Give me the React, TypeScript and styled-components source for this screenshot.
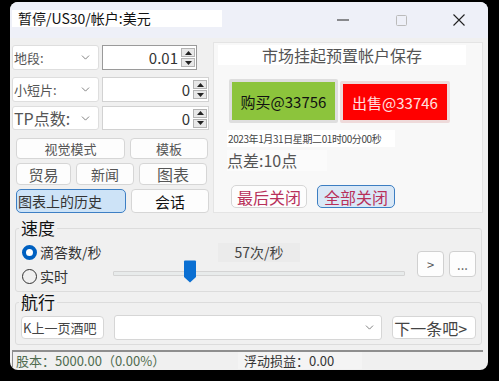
import styled, { createGlobalStyle } from 'styled-components';
import { ChevronDown } from 'lucide-react';

const GlobalStyle = createGlobalStyle`
  html, body {
    margin: 0;
    padding: 0;
    background: #000;
  }
  body {
    width: 499px;
    height: 381px;
    overflow: hidden;
    font-family: "Noto Sans CJK SC", "Noto Sans", sans-serif;
  }
  * {
    box-sizing: border-box;
  }
  button {
    font-family: inherit;
  }
`;

const Window = styled.div`
  margin: 2px 0 0 10px;
  width: 478px;
  height: 368px;
  background: #f0f0f0;
  border-radius: 8px;
  overflow: hidden;

  display: flex;
  flex-direction: column;
`;

const TitleBar = styled.div`
  height: 36px;
  flex-shrink: 0;
  background: #eef0f8;
  padding-left: 2px;

  display: flex;
`;

const TitleText = styled.div`
  margin-top: 8px;
  width: 210px;
  height: 17px;
  padding-left: 6px;

  background: #fff;
  color: #111;
  font-size: 14px;
  line-height: 17px;
  white-space: nowrap;
`;

const WinButtons = styled.div`
  margin-left: auto;
  display: flex;
`;

const WinButton = styled.div`
  width: 58px;
  height: 36px;
  display: flex;
  align-items: center;
  justify-content: center;
`;

const Body = styled.div`
  flex: 1;
  padding: 0 5px 0 2px;
  display: flex;
  flex-direction: column;
`;

const TopArea = styled.div`
  display: flex;
  gap: 4px;
  height: 175px;
`;

const LeftCol = styled.div`
  width: 197px;
  padding-top: 7px;
  display: flex;
  flex-direction: column;
`;

const FieldRow = styled.div<{ $top: number; $h: number }>`
  margin-top: ${(p) => p.$top}px;
  height: ${(p) => p.$h}px;
  display: flex;
  gap: 3px;
`;

const Combo = styled.div<{ $w: number }>`
  width: ${(p) => p.$w}px;
  height: 100%;
  padding: 0 6px 0 1px;

  background: #fff;
  border: 1px solid #dedede;
  border-radius: 3px;

  display: flex;
  align-items: center;
  justify-content: space-between;
`;

const ComboLabel = styled.span<{ $size: number }>`
  font-size: ${(p) => p.$size}px;
  color: #555;
  white-space: nowrap;
`;

const Spin = styled.div<{ $w: number; $dark?: boolean }>`
  width: ${(p) => p.$w}px;
  height: 100%;
  padding: 1px;

  border: 1px solid ${(p) => (p.$dark ? '#9a9a9a' : '#d2d2d2')};
  background: #fff;

  display: flex;
  align-items: stretch;
`;

const SpinValue = styled.div`
  flex: 1;
  padding-right: 3px;
  text-align: right;
  font-size: 15px;
  line-height: 21px;
  color: #333;
`;

const SpinArrows = styled.div`
  width: 14px;
  display: flex;
  flex-direction: column;
  justify-content: center;
  gap: 1px;
`;

const SpinArrow = styled.div`
  height: 9px;
  background: #e8e8e8;
  border: 1px solid #b4b4b4;
  display: flex;
  align-items: center;
  justify-content: center;
`;

const ButtonRow = styled.div<{ $top: number; $h: number }>`
  margin-top: ${(p) => p.$top}px;
  height: ${(p) => p.$h}px;
  padding-left: 4px;
  display: flex;
  gap: 5px;
`;

const Btn = styled.button<{ $w: number; $size: number; $dark?: boolean }>`
  width: ${(p) => p.$w}px;
  height: 100%;
  padding: 0;

  background: #fdfdfd;
  border: 1px solid #d6d6d6;
  border-radius: 4px;

  color: ${(p) => (p.$dark ? '#111' : '#555')};
  font-size: ${(p) => p.$size}px;
  line-height: 1;
`;

const SelectedBtn = styled.button<{ $w: number }>`
  width: ${(p) => p.$w}px;
  height: 100%;
  padding: 0 0 0 1px;

  background: #cde3f7;
  border: 1px solid #3d7fc4;
  border-radius: 5px;

  text-align: left;
  color: #333;
  font-size: 14px;
  line-height: 1;
  white-space: nowrap;
`;

const RightPanel = styled.div`
  width: 270px;
  height: 171px;
  margin-top: 4px;

  background: #f8f8f8;
  border: 1px solid #e4e4e4;

  display: flex;
  flex-direction: column;
`;

const PanelTitle = styled.div`
  margin: 2px 16px 0 4px;
  height: 20px;

  background: #fff;
  color: #555;
  font-size: 16px;
  line-height: 20px;
  text-align: center;
`;

const TradeRow = styled.div`
  margin-top: 14px;
  padding-left: 15px;
  display: flex;
  gap: 2px;
`;

const TradeBtn = styled.button<{ $sell?: boolean }>`
  width: ${(p) => (p.$sell ? 110 : 109)}px;
  height: ${(p) => (p.$sell ? 42 : 44)}px;
  margin-top: ${(p) => (p.$sell ? 2 : 0)}px;
  padding: 0;

  background: ${(p) => (p.$sell ? '#ff0000' : '#8cc43c')};
  border: 3px solid ${(p) => (p.$sell ? '#eedada' : '#dedede')};
  border-radius: 2px;

  color: ${(p) => (p.$sell ? '#ffe0e0' : '#111')};
  font-size: 15px;
`;

const DateStrip = styled.div`
  margin: 7px 0 0 13px;
  width: 168px;
  height: 17px;
  padding-left: 1px;

  background: #fff;
  color: #444;
  font-size: 10px;
  line-height: 17px;
  letter-spacing: -0.4px;
  white-space: nowrap;
`;

const SpreadStrip = styled.div`
  margin: 3px 0 0 13px;
  width: 100px;
  height: 21px;

  background: #fbfbfb;
  color: #555;
  font-size: 16px;
  line-height: 21px;
`;

const CloseRow = styled.div`
  margin: 14px 0 0 17px;
  height: 23px;
  display: flex;
  gap: 10px;
`;

const CloseBtn = styled.button<{ $blue?: boolean }>`
  width: ${(p) => (p.$blue ? 78 : 76)}px;
  height: 100%;
  padding: 0;

  background: ${(p) => (p.$blue ? '#dae8f6' : '#fdfdfd')};
  border: 1px solid ${(p) => (p.$blue ? '#3c7ec2' : '#d6d6d6')};
  border-radius: 5px;

  color: #b8305a;
  font-size: 16px;
  line-height: 1;
`;

const Group = styled.fieldset<{ $top: number }>`
  margin: ${(p) => p.$top}px 1px 0 3px;
  padding: 0;
  border: 1px solid #dcdcdc;
  border-radius: 3px;
  min-width: 0;
`;

const Legend = styled.legend`
  margin-left: 3px;
  padding: 0 2px;
  font-size: 17px;
  line-height: 18px;
  color: #111;
`;

const SpeedContent = styled.div`
  height: 54px;
  padding-left: 6px;
  display: flex;
  align-items: center;
`;

const RadioCol = styled.div`
  width: 91px;
  display: flex;
  flex-direction: column;
  gap: 2px;
`;

const RadioRow = styled.div`
  height: 22px;
  display: flex;
  align-items: center;
  gap: 3px;
  font-size: 14px;
  color: #333;
  white-space: nowrap;
`;

const RadioDot = styled.span<{ $on?: boolean }>`
  width: 15px;
  height: 15px;
  border-radius: 50%;
  flex-shrink: 0;
  background: ${(p) => (p.$on ? '#fff' : 'transparent')};
  border: ${(p) => (p.$on ? '4px solid #0060c0' : '1px solid #333')};
`;

const SliderArea = styled.div`
  width: 292px;
  display: flex;
  flex-direction: column;
`;

const SpeedLabel = styled.div`
  margin-left: 105px;
  width: 82px;
  height: 19px;

  background: #ebebeb;
  color: #444;
  font-size: 14px;
  line-height: 19px;
  text-align: center;
`;

const TrackWrap = styled.div`
  position: relative;
  height: 24px;
  display: flex;
  align-items: center;
`;

const Track = styled.div`
  width: 100%;
  height: 5px;
  background: #e8ebeb;
  border: 1px solid #d4d4d4;
  border-radius: 1px;
`;

const Thumb = styled.svg`
  position: absolute;
  left: 70px;
  top: -2px;
`;

const SmallBtn = styled.button<{ $ml: number }>`
  margin-left: ${(p) => p.$ml}px;
  width: 27px;
  height: 26px;
  padding: 0;

  background: #fdfdfd;
  border: 1px solid #d0d0d0;
  border-radius: 4px;

  color: #555;
  font-size: 13px;
  line-height: 1;
`;

const NavContent = styled.div`
  height: 33px;
  padding: 0 5px;
  display: flex;
  align-items: center;
`;

const NavBtn = styled.button<{ $w: number; $size: number; $ml?: number }>`
  margin-left: ${(p) => p.$ml || 0}px;
  width: ${(p) => p.$w}px;
  height: 23px;
  padding: 0 0 0 1px;

  background: #fff;
  border: 1px solid #d6d6d6;
  border-radius: 4px;

  text-align: left;
  color: #444;
  font-size: ${(p) => p.$size}px;
  line-height: 1;
  white-space: nowrap;
`;

const NavCombo = styled.div`
  margin-left: 10px;
  width: 269px;
  height: 25px;
  padding-right: 5px;

  background: #fff;
  border: 1px solid #d6d6d6;
  border-radius: 3px;

  display: flex;
  align-items: center;
  justify-content: flex-end;
`;

const StatusBar = styled.div`
  margin-top: 5px;
  height: 19px;
  border-top: 2px solid #8e8e8e;
  display: flex;
  font-size: 13px;
  line-height: 17px;
  white-space: nowrap;
`;

const StatusCell = styled.div<{ $w: number; $color: string; $first?: boolean }>`
  width: ${(p) => p.$w}px;
  padding-left: ${(p) => (p.$first ? 3 : 6)}px;
  color: ${(p) => p.$color};
  border-left: ${(p) => (p.$first ? '1px solid #8e8e8e' : 'none')};
  background: ${(p) => (p.$first ? 'transparent' : '#f4f4f4')};
`;

const Arrow = ({ up }: { up?: boolean }) => (
  <svg width="7" height="4" viewBox="0 0 7 4">
    <path d={up ? 'M0 4 L3.5 0 L7 4 Z' : 'M0 0 L3.5 4 L7 0 Z'} fill="#222" />
  </svg>
);

const SpinBox = ({ value, w, dark }: { value: string; w: number; dark?: boolean }) => (
  <Spin $w={w} $dark={dark}>
    <SpinValue>{value}</SpinValue>
    <SpinArrows>
      <SpinArrow>
        <Arrow up />
      </SpinArrow>
      <SpinArrow>
        <Arrow />
      </SpinArrow>
    </SpinArrows>
  </Spin>
);

const ComboBox = ({ label, size }: { label: string; size: number }) => (
  <Combo $w={87}>
    <ComboLabel $size={size}>{label}</ComboLabel>
    <ChevronDown size={13} strokeWidth={1.5} color="#666" />
  </Combo>
);

const App = () => {
  return (
    <>
      <GlobalStyle />
      <Window>
        <TitleBar>
          <TitleText>暂停/US30/帐户:美元</TitleText>
          <WinButtons>
            <WinButton>
              <svg width="12" height="2" viewBox="0 0 12 2">
                <rect x="0" y="0.5" width="12" height="1" fill="#222" />
              </svg>
            </WinButton>
            <WinButton>
              <svg width="11" height="11" viewBox="0 0 11 11">
                <rect x="0.5" y="0.5" width="10" height="10" rx="1" fill="none" stroke="#bbb" />
              </svg>
            </WinButton>
            <WinButton>
              <svg width="12" height="12" viewBox="0 0 12 12">
                <path d="M0.5 0.5 L11.5 11.5 M11.5 0.5 L0.5 11.5" stroke="#222" strokeWidth="1.1" />
              </svg>
            </WinButton>
          </WinButtons>
        </TitleBar>

        <Body>
          <TopArea>
            <LeftCol>
              <FieldRow $top={0} $h={25}>
                <ComboBox label="地段:" size={13} />
                <SpinBox value="0.01" w={95} dark />
              </FieldRow>
              <FieldRow $top={7} $h={25}>
                <ComboBox label="小短片:" size={13} />
                <SpinBox value="0" w={107} />
              </FieldRow>
              <FieldRow $top={4} $h={24}>
                <ComboBox label="TP点数:" size={16} />
                <SpinBox value="0" w={107} />
              </FieldRow>

              <ButtonRow $top={8} $h={21}>
                <Btn $w={109} $size={13}>视觉模式</Btn>
                <Btn $w={78} $size={13}>模板</Btn>
              </ButtonRow>
              <ButtonRow $top={4} $h={22}>
                <Btn $w={55} $size={15}>贸易</Btn>
                <Btn $w={58} $size={14}>新闻</Btn>
                <Btn $w={68} $size={16}>图表</Btn>
              </ButtonRow>
              <ButtonRow $top={4} $h={24}>
                <SelectedBtn $w={110}>图表上的历史</SelectedBtn>
                <Btn $w={78} $size={15} $dark>会话</Btn>
              </ButtonRow>
            </LeftCol>

            <RightPanel>
              <PanelTitle>市场挂起预置帐户保存</PanelTitle>
              <TradeRow>
                <TradeBtn>购买@33756</TradeBtn>
                <TradeBtn $sell>出售@33746</TradeBtn>
              </TradeRow>
              <DateStrip>2023年1月31日星期二01时00分00秒</DateStrip>
              <SpreadStrip>点差:10点</SpreadStrip>
              <CloseRow>
                <CloseBtn>最后关闭</CloseBtn>
                <CloseBtn $blue>全部关闭</CloseBtn>
              </CloseRow>
            </RightPanel>
          </TopArea>

          <Group $top={6}>
            <Legend>速度</Legend>
            <SpeedContent>
              <RadioCol>
                <RadioRow>
                  <RadioDot $on />
                  滴答数/秒
                </RadioRow>
                <RadioRow>
                  <RadioDot />
                  实时
                </RadioRow>
              </RadioCol>
              <SliderArea>
                <SpeedLabel>57次/秒</SpeedLabel>
                <TrackWrap>
                  <Track />
                  <Thumb width="14" height="23" viewBox="0 0 14 23">
                    <path d="M1 1.5 Q1 0.5 2 0.5 H12 Q13 0.5 13 1.5 V17 L7 22.5 L1 17 Z" fill="#0a6fd2" />
                  </Thumb>
                </TrackWrap>
              </SliderArea>
              <SmallBtn $ml={12}>&gt;</SmallBtn>
              <SmallBtn $ml={5}>...</SmallBtn>
            </SpeedContent>
          </Group>

          <Group $top={1}>
            <Legend>航行</Legend>
            <NavContent>
              <NavBtn $w={83} $size={13}>K上一页酒吧</NavBtn>
              <NavCombo>
                <ChevronDown size={13} strokeWidth={1.5} color="#666" />
              </NavCombo>
              <NavBtn $w={84} $size={16} $ml={10}>下一条吧&gt;</NavBtn>
            </NavContent>
          </Group>

          <StatusBar>
            <StatusCell $w={226} $color="#4f6b4f" $first>
              股本：5000.00（0.00%）
            </StatusCell>
            <StatusCell $w={124} $color="#333">
              浮动损益：0.00
            </StatusCell>
          </StatusBar>
        </Body>
      </Window>
    </>
  );
};

export default App;
